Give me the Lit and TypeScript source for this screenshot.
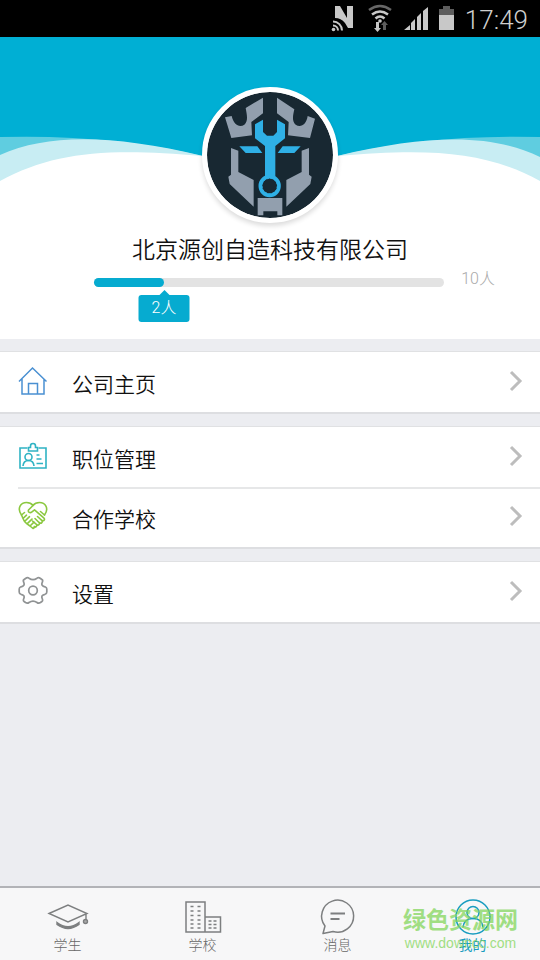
import { LitElement, html, css, svg, nothing } from "lit";
import { customElement, property } from "lit/decorators.js";

const homeIcon = svg`<svg viewBox="0 0 30 30" fill="none" stroke="#4a90d2" stroke-width="1.5">
  <path d="M1 15.500 14.500 2 28.500 15.500M4 13v15h22V13M10.500 28V17.500h9V28"/></svg>`;

const badgeIcon = svg`<svg viewBox="0 0 30 30" fill="none" stroke="#2fb3c4" stroke-width="1.6">
  <path d="M9.500 7H2v20h26V7h-7.500"/><path d="M10.500 10V6.500h2V5a2.500 2.500 0 0 1 5 0v1.500h2V10z"/>
  <circle cx="10.500" cy="16" r="3.500"/><path d="M5 25c.3-3.500 2.500-5.500 5.500-5.500s5.200 2 5.500 5.500M18.500 14h3M18.500 18h5M18.500 22.500h6.500"/></svg>`;

const heartIcon = svg`<svg viewBox="0 0 30 30" fill="none" stroke="#8bc840" stroke-width="1.600" stroke-linejoin="round" stroke-linecap="round">
  <path d="M3.500 14C-1.500 7 3 1.500 8.500 1.500c3 0 5 1 6.500 3 1.500-2 3.500-3 6.500-3C27 1.500 31.500 7 26.500 14"/>
  <path d="M15 4.500 10.500 9c-.8 2.300 1.500 3.500 3.500 1.800l2.500-2 9.500 8.400c1.300 1.600-.6 3.300-2.200 2.200"/>
  <path d="M19.500 15.500l4.500 4.200c1 1.800-1 3.200-2.500 2M17 17.500l4.300 4.200c.8 1.700-1 3-2.400 2M14.500 20l4.200 3.700c.6 1.500-1 2.700-2.400 1.800"/>
  <path d="M3.500 14l3-2.500M26.500 14l-4-3.500M5 17.500l3.500-3.300M6.500 20.500l5-4.800M9 22.800l5-4.700M12 25l4-3.800M3.500 14 5 17.500l1.500 3L9 22.800 12 25l3 2.500 2-1.500"/></svg>`;

const gearIcon = svg`<svg viewBox="0 0 30 30" fill="none" stroke="#909394" stroke-width="1.700" stroke-linejoin="round">
  <path d="M7.500 2.500Q9.500 1 11 2.200 15 5 19 2.200 20.500 1 22.500 2.500L24.500 4Q25 5 24.200 6.500 22.800 10 27 10.800 28.800 11.500 28.800 13v3Q28.800 17.800 27 18.300 22.800 19 24.200 22.500 25 24.500 24.200 25.200L22.500 26.500Q20.500 27.800 19 26.500 15 23.800 11 26.500 9.500 27.800 7.500 26.500L5.800 25.200Q5 24.500 5.800 22.500 7.200 19 3 18.300 1.200 17.800 1.200 16v-3Q1.200 11.500 3 10.800 7.200 10 5.800 6.500 5 5 5.500 4z"/>
  <circle cx="15" cy="14.500" r="4.300"/></svg>`;

const capIcon = svg`<svg viewBox="0 0 42 38" fill="none" stroke="#7d7f80" stroke-width="1.400">
  <path d="M2 16.500 21 8l19 8.500L21 25z M39 17v6"/><circle cx="38.500" cy="24.500" r="2" fill="#aaa"/>
  <path d="M10 25.500q11 8.500 22 0v2q-11 8-22 0z" fill="#7d7f80"/></svg>`;

const schoolIcon = svg`<svg viewBox="0 0 42 38" fill="none" stroke="#7d7f80" stroke-width="1.500">
  <path d="M4 5h19v30H4zM23 20h15.500v15H23z"/>
  <path d="M8.500 9.500h3m4 0h3M8.500 14h3m4 0h3M8.500 18.500h3m4 0h3M8.500 23h3m4 0h3M8.500 27h3m4 0h3M8.500 31h3m4 0h3M26.500 24h3m2 0h3M26.500 27.500h3m2 0h3M26.500 31h3m2 0h3"/></svg>`;

const chatIcon = svg`<svg viewBox="0 0 42 38" fill="none" stroke="#7d7f80" stroke-width="1.500" stroke-linejoin="round">
  <path d="M8 29A16 16 0 1 1 16 34.500L6 36.500z"/><path d="M13.500 16.500H28M13.500 22h9" stroke-width="2"/></svg>`;

const meIcon = svg`<svg viewBox="0 0 42 38" fill="none" stroke="#199dc0" stroke-width="1.500">
  <circle cx="21" cy="20" r="17"/><circle cx="21" cy="15.500" r="6"/><path d="M11 30.500c.5-6 4.500-9 10-9s9.500 3 10 9"/></svg>`;

const emblem = svg`<svg viewBox="36 34 378 378" role="img" aria-label="公司标志">
  <rect x="30" y="30" width="390" height="390" fill="#182832"/>
  <g fill="#929fae">
    <path d="M90 110 110 106C116 132 133 142 148 132 160 122 156 104 152 82L204 51V98L169 124 171 164 109 172z"/>
    <path d="M360 114 338 106C334 132 317 142 302 132 290 122 294 104 298 86L246 51V98L281 124 279 164 345 172z"/>
    <path d="M108 202 130 210V274L176 298V378L104 310 100 288 108 282z"/>
    <path d="M342 202 320 210V274L274 298V378L346 310 350 288 342 282z"/>
    <path d="M188 352h74v52h-15v-12h-42v12h-17z"/>
  </g>
  <g fill="#2fb0e6">
    <path d="M133 197h54l15 20h-50zM317 197h-54l-15 20h50z"/>
    <path d="M204 117V154l12 11h19l11-11v-37l24 14v42l-29 23v94h-31v-94l-30-23v-42z"/>
  </g>
  <circle cx="224" cy="316" r="28" fill="#182832" stroke="#2fb0e6" stroke-width="11"/>
  <circle cx="224" cy="316" r="23" fill="none" stroke="#2fb0e6" stroke-width="3" stroke-dasharray="6 5"/></svg>`;

@customElement("status-bar")
class StatusBar extends LitElement {
  static styles = css`
    :host { display: flex; justify-content: flex-end; align-items: center; height: 37px; padding: 0 12px 0 0; background: #000; color: #cfcfcf; box-sizing: border-box; }
    svg { width: 126px; height: 37px; margin-right: 8px; }
    .time { font: 300 26px/37px Roboto, sans-serif; padding-top: 3px; }
  `;
  render() {
    return html`<svg viewBox="330 0 126 37" aria-hidden="true">
        <g fill="#c8c8c8">
          <path d="M334 18V6h5l7 12V6h6v22h-5l-3-5q-4-5-10-5z"/>
          <circle cx="332.500" cy="29.500" r="1.800"/>
          <path d="M403 30l6-5v5zM410 30v-7l4-4v11zM416 30V17l4-4v17zM422 30V11l5-4v23z"/>
          <path d="M438 15h15v15h-15z"/>
          <path d="M375 22h3v6h2l-3.500 4-3.500-4h2z"/>
        </g>
        <g fill="none" stroke="#c8c8c8" stroke-width="2">
          <path d="M332 25.500a5 5 0 0 1 5 5M332 21.500a9 9 0 0 1 9 9"/>
          <path d="M371 14.500q8-6 16 0M374.500 18.500q4.500-4 9 0" stroke-width="2.500"/>
        </g>
        <path d="M368 10q11-8 22 0" fill="none" stroke="#666" stroke-width="2.500"/>
        <circle cx="379" cy="21" r="1.800" fill="#c8c8c8"/>
        <g fill="#5d5d5d"><path d="M382 30v-5h-2l3.500-4 3.500 4h-2v5zM442 6h7v3h4v6h-15V9h4z"/></g>
      </svg><span class="time">17:49</span>`;
  }
}

@customElement("company-header")
class CompanyHeader extends LitElement {
  @property({ type: Number }) count = 2;
  @property({ type: Number }) total = 10;
  static styles = css`
    :host { display: block; position: relative; background: #fff; padding: 50px 0 16px; }
    .waves { position: absolute; inset: 0 0 auto 0; width: 100%; height: 150px; }
    .avatar { position: relative; box-sizing: border-box; width: 136px; height: 136px; margin: 0 auto; border: 5px solid #fff; border-radius: 50%; overflow: hidden; background: #fff; box-shadow: 0 3px 5px rgba(0,0,0,.14); }
    .avatar svg { display: block; width: 126px; height: 126px; border-radius: 50%; }
    h1 { margin: 10px 0 0; font-size: 23px; line-height: 36px; font-weight: 350; text-align: center; color: #111; }
    .quota { display: grid; grid-template-columns: 1fr auto; column-gap: 17px; padding: 0 45px 0 94px; align-items: start; }
    .track { height: 9px; margin-top: 9px; background: #e3e3e3; border-radius: 5px; }
    .fill { position: relative; height: 9px; border-radius: 5px; background: #06abd0; }
    .total { color: #aaa; font-size: 16px; line-height: 20px; }
    .quota .total { margin-bottom: 34px; }
    .bubble { position: absolute; top: 17px; right: 0; transform: translateX(50%); width: 51px; height: 27px; border-radius: 3px; background: #06abd0; color: #fff; font-size: 16px; line-height: 26px; text-align: center; }
    .bubble::before { content: ""; position: absolute; left: 20px; top: -5px; border: 6px solid transparent; border-top: 0; border-bottom-color: #06abd0; }
  `;
  render() {
    return html`
      <svg class="waves" viewBox="0 0 540 150" preserveAspectRatio="none" aria-hidden="true">
        <path d="M0 0H540V150H0z" fill="#00afd4"/>
        <path d="M0 100Q110 97 203 119H337Q430 97 540 100V150H0z" fill="#5fcde0"/>
        <path d="M0 118C48 97 110 97 203 119H337C430 97 492 97 540 120V150H0z" fill="#c8edf3"/>
        <path d="M0 144C55 114 110 111 203 119H337C430 111 485 114 540 144V150H0z" fill="#fff"/>
      </svg>
      <div class="avatar">${emblem}</div>
      <h1>北京源创自造科技有限公司</h1>
      <div class="quota">
        <div class="track" role="progressbar" aria-label="人数" aria-valuenow=${this.count} aria-valuemax=${this.total}>
          <div class="fill" style="width:${(this.count / this.total) * 100}%"><span class="bubble">${this.count}人</span></div>
        </div>
        <span class="total">${this.total}人</span>
      </div>`;
  }
}

const groups = [
  [{ label: "公司主页", icon: homeIcon }],
  [{ label: "职位管理", icon: badgeIcon }, { label: "合作学校", icon: heartIcon }],
  [{ label: "设置", icon: gearIcon }],
];

const tabs = [
  { label: "学生", icon: capIcon, active: false },
  { label: "学校", icon: schoolIcon, active: false },
  { label: "消息", icon: chatIcon, active: false },
  { label: "我的", icon: meIcon, active: true },
];

@customElement("app-root")
class AppRoot extends LitElement {
  static styles = css`
    :host { display: flex; flex-direction: column; min-height: 100vh; background: #ecedf1; font-family: Roboto, "Noto Sans CJK SC", sans-serif; font-weight: 300; color: #111; }
    main { flex: 1; display: flex; flex-direction: column; gap: 12px; padding-top: 12px; }
    ul { list-style: none; margin: 0; padding: 0; background: #fff; border-top: 1px solid #e0e1e3; border-bottom: 2px solid #dddee1; }
    li + li { position: relative; }
    li + li::before { content: ""; position: absolute; left: 18px; right: 0; top: 0; height: 2px; background: #e6e7e8; }
    .row { display: flex; align-items: center; box-sizing: border-box; height: 60px; padding: 0 17px 2px 18px; color: inherit; text-decoration: none; }
    .row .icon { width: 30px; height: 30px; margin-right: 24px; }
    .row .icon svg { display: block; width: 30px; height: 30px; }
    .label { flex: 1; font-size: 21px; line-height: 30px; font-weight: 350; padding-top: 8px; }
    .chevron { width: 14px; height: 22px; fill: none; stroke: #bdbdbd; stroke-width: 3; }
    nav { position: relative; display: grid; grid-template-columns: repeat(4, 1fr); height: 74px; box-sizing: border-box; border-top: 2px solid #b2b3b7; background: #f7f7f8; }
    .tab { display: flex; flex-direction: column; align-items: center; padding: 9px 0 0; border: 0; background: none; font: inherit; font-size: 14px; line-height: 20px; color: #666; }
    .tab svg { display: block; width: 42px; height: 38px; }
    .tab.active { color: #199dc0; font-weight: 400; }
    .mark { position: absolute; right: 22px; top: 19px; text-align: center; color: #84d65c; opacity: .75; pointer-events: none; }
    .mark strong { display: block; font-size: 23px; line-height: 28px; font-weight: 700; }
    .mark span { display: block; font: 14px/16px "Liberation Sans", sans-serif; }
  `;
  render() {
    return html`
      <status-bar></status-bar>
      <company-header></company-header>
      <main>
        ${groups.map((g) => html`<ul>${g.map((r) => html`<li><a class="row" href="#">
          <span class="icon">${r.icon}</span><span class="label">${r.label}</span>
          <svg class="chevron" viewBox="0 0 14 22" aria-hidden="true"><path d="M2 2l9 9-9 9"/></svg></a></li>`)}</ul>`)}
      </main>
      <nav>
        ${tabs.map((t) => html`<button class="tab ${t.active ? "active" : ""}" aria-current=${t.active ? "page" : nothing}>${t.icon}<span>${t.label}</span></button>`)}
        <div class="mark"><strong>绿色资源网</strong><span>www.downcc.com</span></div>
      </nav>`;
  }
}
